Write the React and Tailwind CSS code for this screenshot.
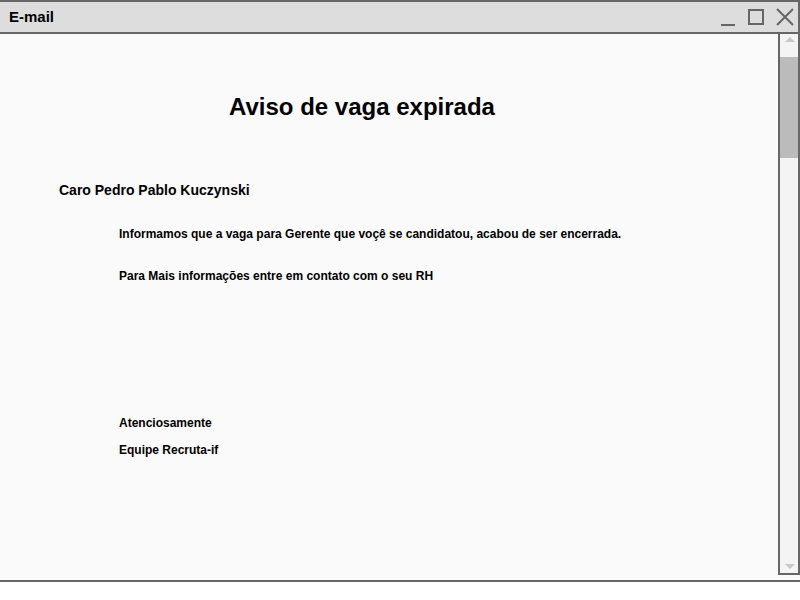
import React from 'react';

const WindowControls = () => (
  <div className="flex items-center gap-[12px] pr-[4px]">
    {/* minimize */}
    <svg width="16" height="16" viewBox="0 0 16 16" className="mt-[4px]">
      <line x1="1" y1="14" x2="15" y2="14" stroke="#666" strokeWidth="2" />
    </svg>
    {/* maximize */}
    <svg width="16" height="16" viewBox="0 0 16 16">
      <rect x="1" y="1" width="14" height="14" fill="none" stroke="#666" strokeWidth="2" />
    </svg>
    {/* close */}
    <svg width="18" height="18" viewBox="0 0 18 18">
      <path d="M1 1 L17 17 M17 1 L1 17" stroke="#666" strokeWidth="2" />
    </svg>
  </div>
);

const Scrollbar = () => (
  <div className="relative -mt-[2px] h-[543px] w-[22px] shrink-0 self-start border-2 border-[#666] bg-[#f4f4f4]">
    <div className="absolute left-[5px] top-[3px] h-0 w-0 border-x-[5px] border-b-[5px] border-x-transparent border-b-[#c8c8c8]" />
    <div className="absolute left-0 right-0 top-[23px] h-[101px] bg-[#bbbbbb]" />
    <div className="absolute bottom-[4px] left-[5px] h-0 w-0 border-x-[5px] border-t-[5px] border-x-transparent border-t-[#c8c8c8]" />
  </div>
);

export default function App() {
  return (
    <div className="h-[600px] w-[800px] bg-white" style={{ fontFamily: '"Liberation Sans", Arial, sans-serif' }}>
      <div className="flex h-[582px] w-[800px] flex-col border-y-2 border-[#666] bg-[#fafafa]">
        {/* Title bar */}
        <div className="flex h-[32px] shrink-0 items-center justify-between border-b-2 border-r-2 border-[#666] bg-[#dddddd] pl-[9px]">
          <span className="text-[15px] font-bold text-black">E-mail</span>
          <WindowControls />
        </div>

        {/* Body */}
        <div className="flex flex-1">
          <div className="flex-1 text-black">
            <h1 className="mt-[59px] pl-[229px] text-[24px] font-bold leading-[28px]">Aviso de vaga expirada</h1>

            <p className="mt-[59px] pl-[59px] text-[14px] font-bold leading-[20px]">Caro Pedro Pablo Kuczynski</p>

            <div className="pl-[119px] text-[12px] font-bold leading-[16px]">
              <p className="mt-[26px]">Informamos que a vaga para Gerente que voçê se candidatou, acabou de ser encerrada.</p>
              <p className="mt-[26px]">Para Mais informações entre em contato com o seu RH</p>
              <p className="mt-[131px]">Atenciosamente</p>
              <p className="mt-[11px]">Equipe Recruta-if</p>
            </div>
          </div>
          <Scrollbar />
        </div>
      </div>
    </div>
  );
}
